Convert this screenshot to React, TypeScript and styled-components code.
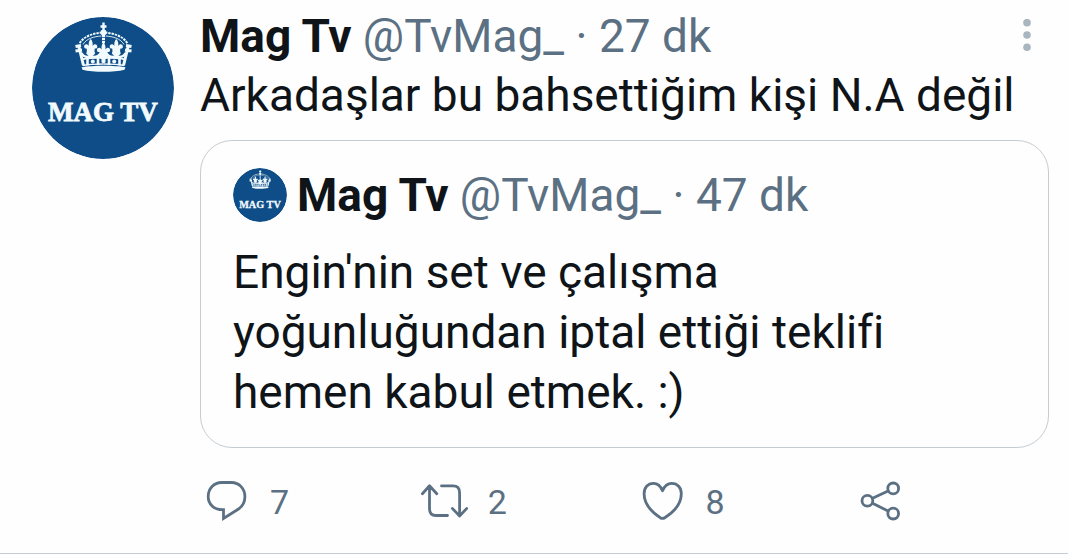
import React from "react";
import styled, { createGlobalStyle } from "styled-components";

const color = {
  ink: "#0f1419",
  muted: "#5b7083",
  faint: "#a9b6c0",
  line: "#c6cdd2",
  brand: "#0e4d88",
  emblem: "#f1fafd",
};

const GlobalStyle = createGlobalStyle`
  *, *::before, *::after { box-sizing: border-box; }
  body {
    margin: 0;
    background: #fefefe;
    color: ${color.ink};
    font-family: Roboto, "Noto Sans", sans-serif;
  }
`;

const Tweet = styled.article`
  display: flex;
  gap: 26px;
  padding: 7px 19px 25px 32px;
  border-bottom: 1px solid ${color.line};
`;

const AvatarLink = styled.a<{ $size: number }>`
  flex: none;
  display: block;
  width: ${(p) => p.$size}px;
  height: ${(p) => p.$size}px;
  border-radius: 50%;
  overflow: hidden;

  svg {
    display: block;
    width: 100%;
    height: 100%;
  }
`;

const AvatarColumn = styled.div`
  flex: none;
  padding-top: 10px;
`;

const Content = styled.div`
  flex: 1;
  min-width: 0;
`;

const Header = styled.header`
  display: flex;
  align-items: center;
  justify-content: space-between;
`;

const Byline = styled.div`
  font-size: 46px;
  line-height: 58px;
  color: ${color.muted};
`;

const Name = styled.a`
  font-weight: 700;
  color: ${color.ink};
  text-decoration: none;
`;

const Handle = styled.a`
  color: inherit;
  text-decoration: none;
`;

const MenuButton = styled.button`
  flex: none;
  display: flex;
  justify-content: center;
  width: 44px;
  padding: 0;
  border: 0;
  background: none;
  color: ${color.faint};
  cursor: pointer;
`;

const Message = styled.p`
  margin: 0;
  font-size: 46px;
  line-height: 60px;
`;

const Quote = styled.section`
  display: flex;
  flex-direction: column;
  gap: 18px;
  margin-top: 15px;
  padding: 25px 32px;
  border: 1px solid ${color.line};
  border-radius: 32px;
`;

const QuoteHeader = styled.header`
  display: flex;
  align-items: center;
  gap: 10px;
`;

const Actions = styled.footer`
  display: grid;
  grid-template-columns: repeat(3, 9fr) 8fr;
  align-items: start;
  margin-top: 28px;
  padding-left: 2px;
`;

const ActionButton = styled.button`
  display: flex;
  align-items: flex-start;
  gap: 20px;
  padding: 0;
  border: 0;
  background: none;
  font: inherit;
  font-size: 34px;
  line-height: 52px;
  color: ${color.muted};
  cursor: pointer;

  svg {
    flex: none;
    fill: none;
    stroke: currentColor;
    stroke-width: 2.8;
    stroke-linecap: round;
    stroke-linejoin: round;
  }
`;

const fleur =
  "M0 0C1.800 2 2.400 4.500 1.800 7C3.500 4.500 6.300 5 6.600 7.600C6.700 9.300 5.300 10 4.200 9.400C3.800 11 3.500 12 4.500 14.500L2 17H-2L-4.500 14.500C-3.500 12 -3.800 11 -4.200 9.400C-5.300 10 -6.700 9.300 -6.600 7.600C-6.300 5 -3.500 4.500 -1.800 7C-2.400 4.500 -1.800 2 0 0Z";

function HalfCrown() {
  return (
    <g fill="none" stroke={color.emblem}>
      <path d="M70 15.500C61 16.500 52 19 47.500 26.500" strokeWidth="2" strokeDasharray="2.4 0.9" />
      <path d="M69.500 19C62 19.500 54.500 21.500 51 27.500" strokeWidth="0.9" />
      <path d="M43.500 29.500L49 28.500M43.500 34L50 33M46.500 28L51.500 48.500" strokeWidth="3" />
      <path d="M49.500 36C51.500 40 55 40.500 58.700 39.500C63 40.500 66.500 39.500 68.500 36.500" strokeWidth="2.4" />
      <path d="M49.500 42.500C56 40.800 63 40.500 71.500 40.500" strokeWidth="2" />
      <path d="M51 48.500C57 47.300 63 47 71.500 47" strokeWidth="1.600" />
      <path d="M55.500 41.500V48.500M66 41V48" strokeWidth="2.6" />
      <circle cx="60.800" cy="44.500" r="2" fill={color.emblem} stroke="none" />
      <path d={fleur} transform="translate(58.700 22)" fill={color.emblem} stroke="none" />
    </g>
  );
}

function Logo() {
  return (
    <svg viewBox="0 0 142 142" role="img" aria-label="Mag Tv">
      <circle cx="71" cy="71" r="71" fill={color.brand} />
      <HalfCrown />
      <g transform="translate(143 0) scale(-1 1)">
        <HalfCrown />
      </g>
      <g fill="none" stroke={color.emblem}>
        <path d="M71.500 5.500V14M68.500 9.500H74.500" strokeWidth="2.4" />
        <path d="M71.500 18V27" strokeWidth="3" strokeDasharray="2.2 0.8" />
      </g>
      <g fill={color.emblem}>
        <circle cx="71.500" cy="15.500" r="3" />
        <circle cx="71.500" cy="44" r="2.200" />
        <path d={fleur} transform="translate(71.500 25.500)" />
        <path d="M49.500 50.300C60 48.300 83 48.300 93.500 50.300L92.500 52.800C82 55.500 61 55.500 50.500 52.800Z" />
      </g>
      <text
        x="71"
        y="104"
        textAnchor="middle"
        fill={color.emblem}
        stroke={color.emblem}
        strokeWidth="0.8"
        fontFamily='"Liberation Serif", serif'
        fontWeight="700"
        fontSize="27"
      >
        MAG TV
      </text>
    </svg>
  );
}

function MenuIcon() {
  return (
    <svg width="8" height="34" viewBox="0 0 8 34" fill="currentColor" aria-hidden="true">
      <circle cx="4" cy="3.700" r="3.800" />
      <circle cx="4" cy="16" r="3.800" />
      <circle cx="4" cy="28.300" r="3.800" />
    </svg>
  );
}

function ActionIcon({ children }: { children: React.ReactNode }) {
  return (
    <svg width="48" height="48" viewBox="0 0 48 48" aria-hidden="true">
      {children}
    </svg>
  );
}

const actions = [
  {
    label: "Yanıtla",
    count: 7,
    icon: (
      <path
        strokeLinejoin="miter"
        d="M19.500 6.500H29.500C37.300 6.500 42.900 12.700 42.900 20.700C42.900 26 40.500 30.300 36.500 33L21.500 42.500V33.700H20C12 33.700 6.200 28.200 6.200 20.500C6.200 12.700 12 6.500 19.500 6.500Z"
      />
    ),
  },
  {
    label: "Retweetle",
    count: 2,
    icon: (
      <path d="M2.400 17.700L9.500 9.800L16.800 17.700M9.500 10V32.700Q9.500 39.500 16 39.500H27.500M21.500 9.900H33Q39.600 9.900 39.600 16.700V39.700M32.300 32.400L39.600 40L46.800 32.400" />
    ),
  },
  {
    label: "Beğen",
    count: 8,
    icon: (
      <path d="M24.500 14.800C22.700 10.200 19.700 7.400 15.500 7.400C9.700 7.400 6.100 11.700 6.100 17.700C6.100 28.200 14.700 36.700 22.200 41.700Q24.500 43.100 26.800 41.700C34.700 36.700 43.300 28.200 43.300 17.700C43.300 11.700 39.500 7.400 33.700 7.400C29.500 7.400 26.400 10.200 24.500 14.800Z" />
    ),
  },
  {
    label: "Paylaş",
    icon: (
      <>
        <circle cx="12.400" cy="24.800" r="5.400" />
        <circle cx="38.200" cy="12.400" r="5.400" />
        <circle cx="38.200" cy="37.600" r="5.400" />
        <path d="M17.500 22.300L33.100 14.900M17.500 27.300L33.100 35" />
      </>
    ),
  },
];

function Author({ age }: { age: string }) {
  return (
    <Byline>
      <Name href="#profile">Mag Tv</Name> <Handle href="#profile">@TvMag_</Handle> · <time>{age}</time>
    </Byline>
  );
}

export default function App() {
  return (
    <main lang="tr">
      <GlobalStyle />
      <Tweet>
        <AvatarColumn>
          <AvatarLink href="#profile" $size={142}>
            <Logo />
          </AvatarLink>
        </AvatarColumn>
        <Content>
          <Header>
            <Author age="27 dk" />
            <MenuButton type="button" aria-label="Diğer">
              <MenuIcon />
            </MenuButton>
          </Header>
          <Message>Arkadaşlar bu bahsettiğim kişi N.A değil</Message>
          <Quote>
            <QuoteHeader>
              <AvatarLink href="#profile" $size={54}>
                <Logo />
              </AvatarLink>
              <Author age="47 dk" />
            </QuoteHeader>
            <Message>Engin'nin set ve çalışma yoğunluğundan iptal ettiği teklifi hemen kabul etmek. :)</Message>
          </Quote>
          <Actions>
            {actions.map((action) => (
              <ActionButton key={action.label} type="button" aria-label={action.label}>
                <ActionIcon>{action.icon}</ActionIcon>
                {action.count !== undefined && <span>{action.count}</span>}
              </ActionButton>
            ))}
          </Actions>
        </Content>
      </Tweet>
    </main>
  );
}
